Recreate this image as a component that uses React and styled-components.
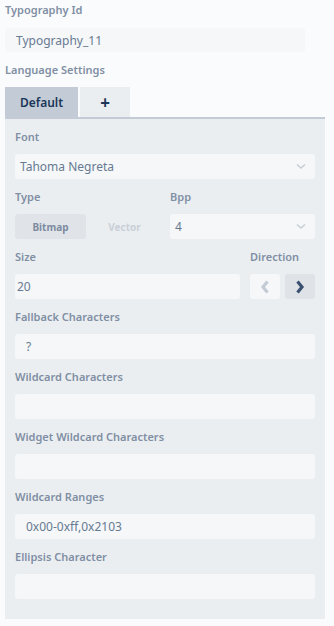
import React from "react"
import styled, { createGlobalStyle } from "styled-components"

const GlobalStyle = createGlobalStyle`
  html, body {
    margin: 0;
    padding: 0;
    background: #fafbfc;
    font-family: "Noto Sans", "Open Sans", sans-serif;
  }
`

const Page = styled.div`
  width: 334px;
  padding: 0 9px 7px 5px;
  box-sizing: border-box;
`

const Label = styled.div`
  height: 20px;
  line-height: 20px;
  font-size: 11px;
  font-weight: 600;
  color: #808fa4;
  margin-bottom: ${(p) => (p.$tight ? "7px" : "8px")};
  white-space: nowrap;
`

const Field = styled.div`
  height: ${(p) => p.$h || 25}px;
  box-sizing: border-box;
  background: #f5f7f9;
  border-radius: 3px;
  padding: 0 11px 0 ${(p) => p.$pad ?? 11}px;
  display: flex;
  align-items: center;
  justify-content: space-between;
  font-size: 12px;
  color: #687a91;
  width: ${(p) => p.$w || "auto"};
`

const Group = styled.div`
  margin-bottom: 8px;
`

const Tabs = styled.div`
  display: flex;
  gap: 2px;
  height: 30px;
`

const Tab = styled.div`
  width: ${(p) => p.$w}px;
  display: flex;
  align-items: center;
  justify-content: center;
  font-size: ${(p) => (p.$plus ? "17px" : "12px")};
  font-weight: ${(p) => (p.$plus ? 700 : 600)};
  color: #1c3658;
  background: ${(p) => (p.$active ? "#c3ccd6" : "#ebeef1")};
`

const Panel = styled.div`
  background: #ebeef1;
  border-top: 2px solid #c3ccd6;
  padding: 8px 10px 12px;
`

const TwoCols = styled.div`
  display: grid;
  grid-template-columns: 140px 1fr;
  column-gap: 15px;
`

const Toggle = styled.div`
  display: flex;
  height: 25px;
`

const ToggleOption = styled.div`
  flex: 0 0 ${(p) => p.$w}px;
  display: flex;
  align-items: center;
  justify-content: center;
  font-size: 10px;
  font-weight: 700;
  border-radius: 3px;
  color: ${(p) => (p.$on ? "#7d8ba0" : "#c9d0d8")};
  background: ${(p) => (p.$on ? "#e0e4e9" : "transparent")};
`

const SizeRow = styled.div`
  display: grid;
  grid-template-columns: 1fr 65px;
  column-gap: 10px;
`

const DirButtons = styled.div`
  display: flex;
  gap: 5px;
`

const DirButton = styled.div`
  width: 30px;
  height: 25px;
  border-radius: 3px;
  display: flex;
  align-items: center;
  justify-content: center;
  background: ${(p) => (p.$on ? "#dfe3e8" : "#f5f7f9")};
  color: ${(p) => (p.$on ? "#3b5172" : "#c3cbd4")};
`

const Caret = styled.span`
  color: #c8ced6;
  display: flex;
  margin-right: -2px;
`

const Chevron = ({ dir }) => {
  if (dir === "down") {
    return (
      <svg width="10" height="7" viewBox="0 0 10 7">
        <path d="M1 1.5 L5 5 L9 1.5" fill="none" stroke="currentColor" strokeWidth="1.6" />
      </svg>
    )
  }
  const d = dir === "left" ? "M7.5 1.5 L3 7 L7.5 12.5" : "M2.5 1.5 L7 7 L2.5 12.5"
  return (
    <svg width="10" height="14" viewBox="0 0 10 14">
      <path d={d} fill="none" stroke="currentColor" strokeWidth="3.2" />
    </svg>
  )
}

const Select = ({ value }) => (
  <Field $pad={5}>
    <span>{value}</span>
    <Caret>
      <Chevron dir="down" />
    </Caret>
  </Field>
)

const TextGroup = ({ label, value }) => (
  <Group>
    <Label $tight>{label}</Label>
    <Field>{value}</Field>
  </Group>
)

const App = () => (
  <>
    <GlobalStyle />
    <Page>
      <Label>Typography Id</Label>
      <Field $h={24} $w="300px">
        Typography_11
      </Field>
      <Label $tight style={{ marginTop: 8 }}>
        Language Settings
      </Label>
      <Tabs>
        <Tab $w={73} $active>
          Default
        </Tab>
        <Tab $w={50} $plus>
          +
        </Tab>
      </Tabs>
      <Panel>
        <Group>
          <Label $tight>Font</Label>
          <Select value="Tahoma Negreta" />
        </Group>
        <Group>
          <TwoCols>
            <div>
              <Label $tight>Type</Label>
              <Toggle>
                <ToggleOption $w={71} $on>
                  Bitmap
                </ToggleOption>
                <ToggleOption $w={77}>Vector</ToggleOption>
              </Toggle>
            </div>
            <div>
              <Label $tight>Bpp</Label>
              <Select value="4" />
            </div>
          </TwoCols>
        </Group>
        <Group>
          <SizeRow>
            <div>
              <Label $tight>Size</Label>
              <Field $pad={2}>20</Field>
            </div>
            <div>
              <Label $tight>Direction</Label>
              <DirButtons>
                <DirButton>
                  <Chevron dir="left" />
                </DirButton>
                <DirButton $on>
                  <Chevron dir="right" />
                </DirButton>
              </DirButtons>
            </div>
          </SizeRow>
        </Group>
        <TextGroup label="Fallback Characters" value="?" />
        <TextGroup label="Wildcard Characters" value="" />
        <TextGroup label="Widget Wildcard Characters" value="" />
        <TextGroup label="Wildcard Ranges" value="0x00-0xff,0x2103" />
        <TextGroup label="Ellipsis Character" value="" />
      </Panel>
    </Page>
  </>
)

export default App
